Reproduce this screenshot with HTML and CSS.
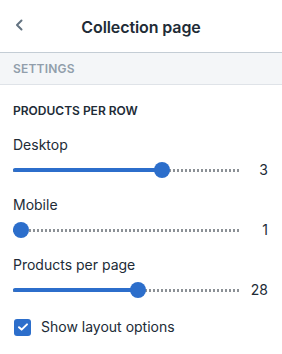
FILE: index.html
```html
<!DOCTYPE html>
<html>
<head>
<meta charset="utf-8">
<link rel="stylesheet" href="styles.css">
</head>
<body>
<div class="panel">
  <header class="header">
    <button class="back" aria-label="Back">
      <svg width="8" height="12" viewBox="0 0 8 12"><path d="M6.5 1.5 L2 6 L6.5 10.5" fill="none" stroke="#637381" stroke-width="2" stroke-linecap="round" stroke-linejoin="round"/></svg>
    </button>
    <h1 class="title">Collection page</h1>
  </header>
  <div class="band">SETTINGS</div>
  <section class="section">
    <h2 class="heading">PRODUCTS PER ROW</h2>
    <div class="field">
      <div class="label">Desktop</div>
      <div class="slider">
        <div class="track" style="--v:0.667"><div class="fill"></div><div class="thumb"></div></div>
        <div class="value">3</div>
      </div>
    </div>
    <div class="field">
      <div class="label">Mobile</div>
      <div class="slider">
        <div class="track" style="--v:0"><div class="fill"></div><div class="thumb"></div></div>
        <div class="value">1</div>
      </div>
    </div>
    <div class="field">
      <div class="label">Products per page</div>
      <div class="slider">
        <div class="track" style="--v:0.555"><div class="fill"></div><div class="thumb"></div></div>
        <div class="value">28</div>
      </div>
    </div>
    <label class="check">
      <span class="box"><svg width="12" height="10" viewBox="0 0 12 10"><path d="M2 5.2 L4.6 7.6 L10 2.4" fill="none" stroke="#fff" stroke-width="2" stroke-linecap="round" stroke-linejoin="round"/></svg></span>
      <span class="check-label">Show layout options</span>
    </label>
  </section>
</div>
</body>
</html>
```

FILE: styles.css
```css
* { box-sizing: border-box; }
html, body { margin: 0; padding: 0; background: #fff; }
body {
  font-family: Inter, "Liberation Sans", Arial, sans-serif;
  color: #212b36;
  width: 282px;
  height: 354px;
  overflow: hidden;
}
.header {
  height: 53px;
  border-bottom: 1px solid #c4cdd5;
  display: flex;
  align-items: center;
  justify-content: center;
  position: relative;
}
.back {
  position: absolute;
  left: 13px;
  top: 19px;
  width: 12px;
  height: 12px;
  padding: 0;
  border: 0;
  background: none;
  display: flex;
  align-items: center;
  justify-content: center;
}
.title {
  margin: 0;
  font-size: 16px;
  font-weight: 600;
  line-height: 20px;
  margin-top: 1px;
  letter-spacing: -0.1px;
}
.band {
  height: 32px;
  background: #f4f6f8;
  border-bottom: 1px solid #dfe3e8;
  color: #919eab;
  font-size: 12px;
  font-weight: 600;
  letter-spacing: 0.2px;
  padding-left: 13px;
  display: flex;
  align-items: center;
}
.section {
  padding: 16px 14px 0 13px;
}
.heading {
  margin: 0 0 14px;
  font-size: 12px;
  font-weight: 600;
  line-height: 20px;
}
.field {
  display: flex;
  flex-direction: column;
  gap: 5px;
  margin-bottom: 15px;
}
.label {
  font-size: 14px;
  line-height: 20px;
}
.slider {
  display: flex;
  align-items: center;
  height: 20px;
}
.track {
  flex: 1;
  position: relative;
  height: 3px;
  background: repeating-linear-gradient(90deg, #8c9196 0 2px, transparent 2px 4px);
}
.fill {
  position: absolute;
  left: 0;
  top: -0.5px;
  height: 4px;
  width: calc(var(--v) * (100% - 16px) + 8px);
  background: #2c6ecb;
  border-radius: 2px;
}
.thumb {
  position: absolute;
  top: 50%;
  left: calc(var(--v) * (100% - 16px));
  width: 16px;
  height: 16px;
  transform: translateY(-50%);
  border-radius: 50%;
  background: #2c6ecb;
}
.value {
  width: 28px;
  text-align: right;
  font-size: 14px;
  line-height: 20px;
}
.check {
  display: flex;
  align-items: center;
  gap: 10px;
  margin-top: 17px;
}
.box {
  width: 17px;
  height: 17px;
  border-radius: 3px;
  background: #2c6ecb;
  display: flex;
  align-items: center;
  justify-content: center;
  margin-left: 1px;
}
.check-label {
  font-size: 14px;
  line-height: 20px;
}
```
